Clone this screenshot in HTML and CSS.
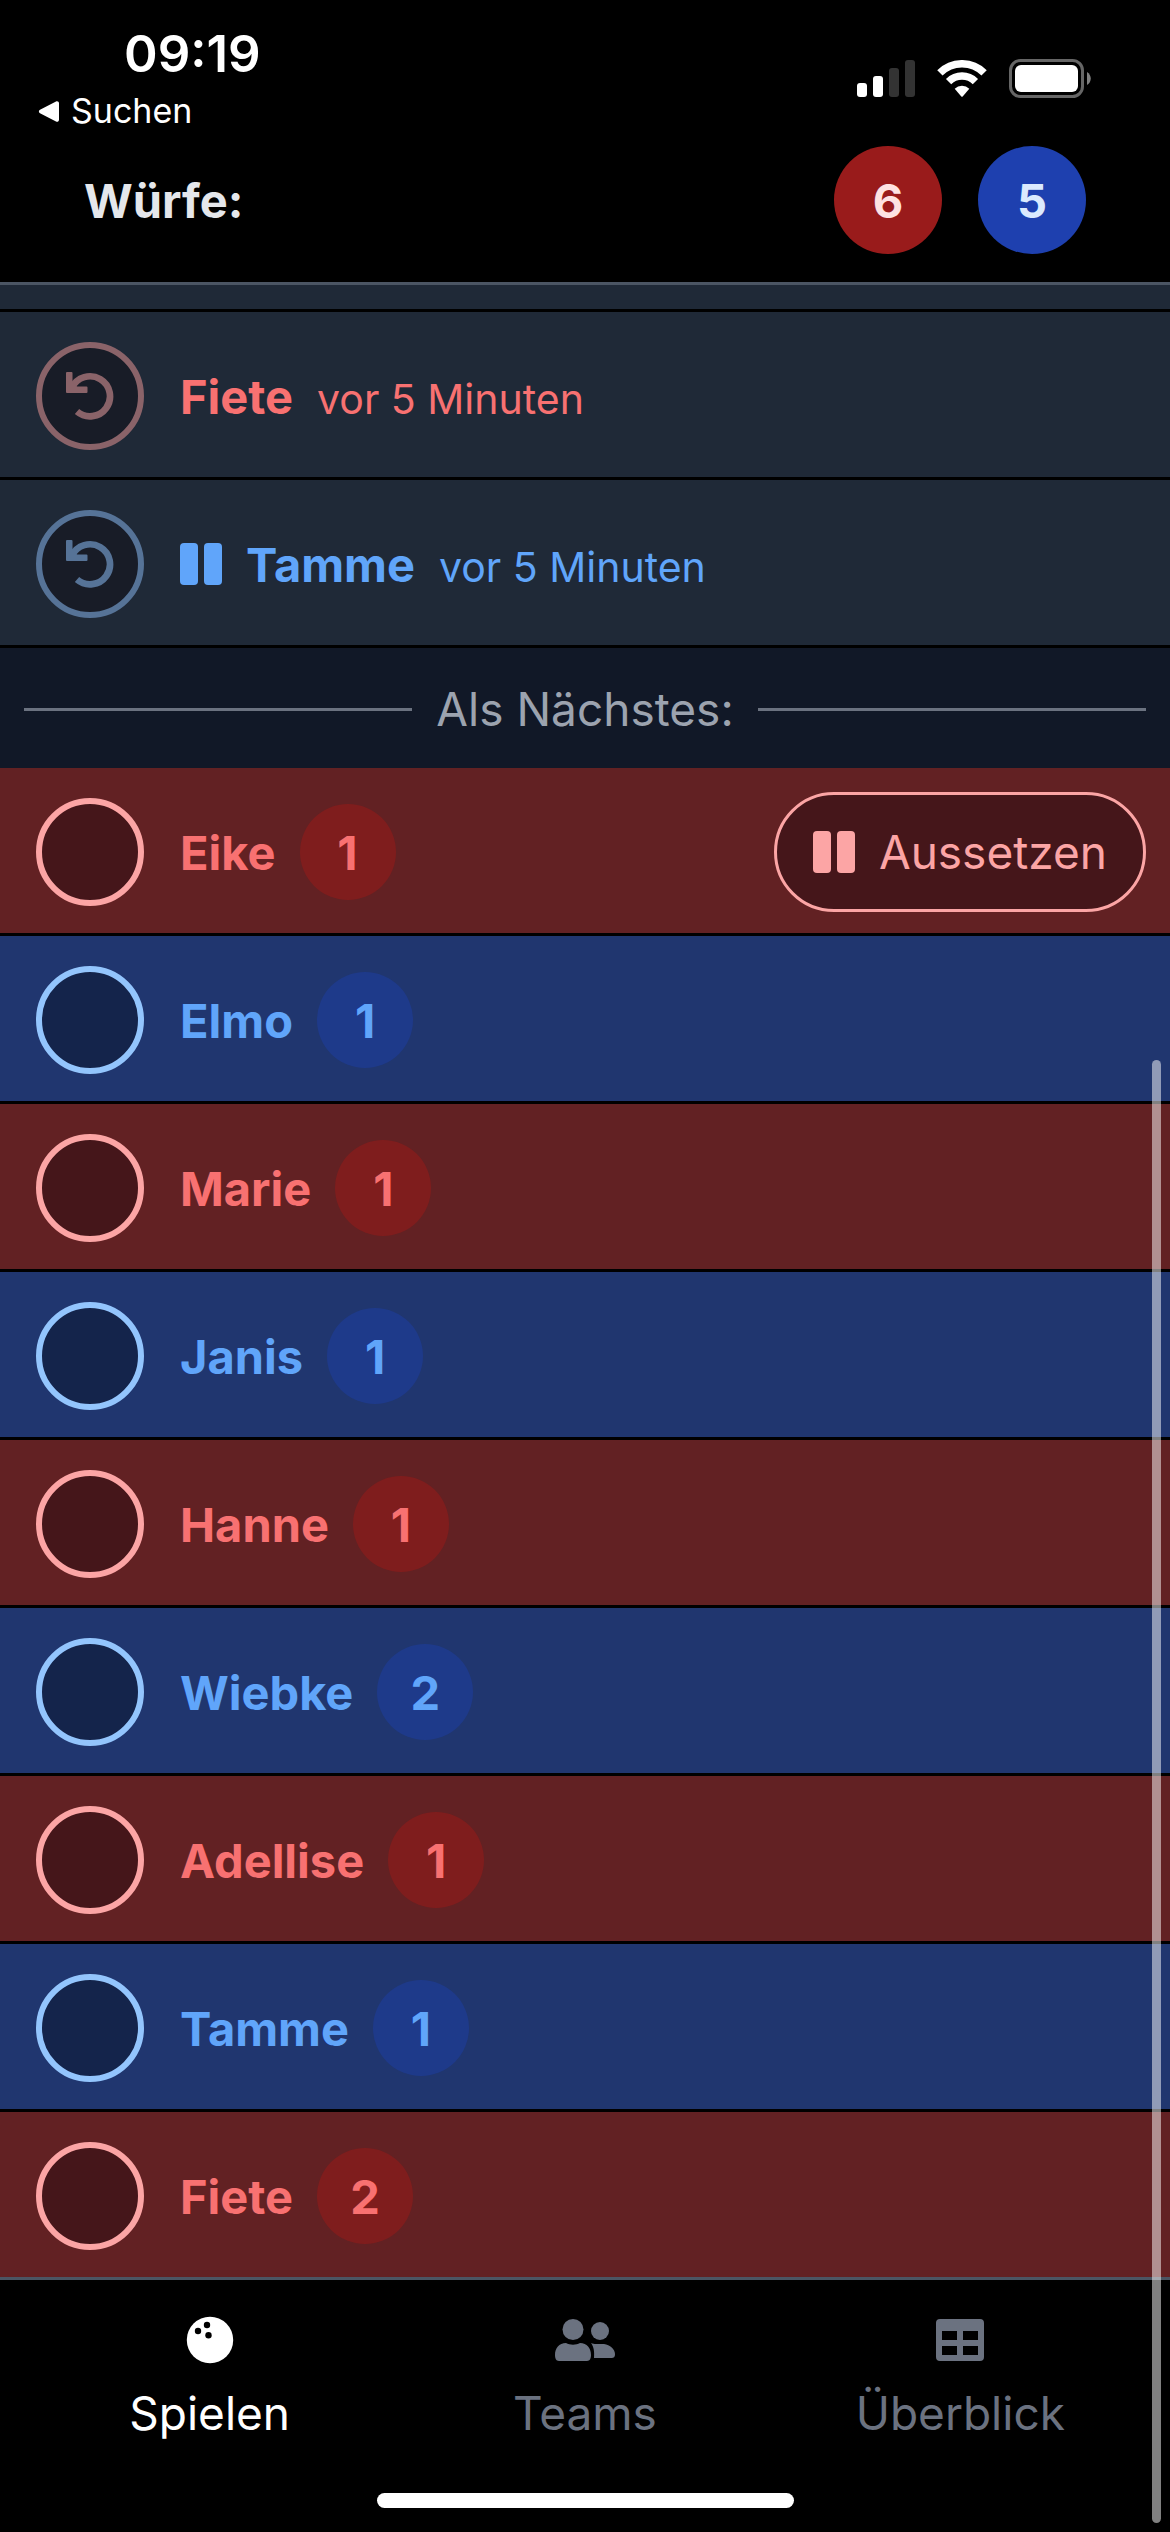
FILE: index.html
```html
<!DOCTYPE html>
<html lang="de">
<head>
<meta charset="utf-8">
<meta name="viewport" content="width=device-width">
<title>Kegeln – Spielen</title>
<link rel="stylesheet" href="styles.css">
</head>
<body>
<svg class="defs" aria-hidden="true">
  <symbol id="undo" viewBox="0 0 48 48"><path d="M6 15.600A20 20 0 1 1 11 39.500" fill="none" stroke="currentColor" stroke-width="6.700"/><path d="M1 0h4.500a1 1 0 0 1 1 1v7.500l1 3L11 14.500h9.500a1 1 0 0 1 1 1V20a1 1 0 0 1-1 1H1a1 1 0 0 1-1-1V1a1 1 0 0 1 1-1z"/></symbol>
  <symbol id="pause" viewBox="0 0 42 42"><rect width="18" height="42" rx="4"/><rect x="24" width="18" height="42" rx="4"/></symbol>
</svg>
<div class="app">
  <header class="top">
    <div class="status">
      <div class="status-left">
        <span class="clock">09:19</span>
        <a class="back" href="#suchen"><svg class="back-icon" viewBox="0 0 21 23"><path d="M18 1.500 2 9.700a2 2 0 0 0 0 3.600l16 8.200c1.500.7 3-.2 3-1.800V3.300c0-1.600-1.500-2.500-3-1.800z"/></svg>Suchen</a>
      </div>
      <div class="status-right">
        <svg class="signal" viewBox="0 0 58 37"><rect y="23" width="10" height="14" rx="3"/><rect x="16" y="16" width="10" height="21" rx="3"/><g fill="#333"><rect x="32" y="8" width="10" height="29" rx="3"/><rect x="48" width="10" height="37" rx="3"/></g></svg>
        <svg class="wifi" viewBox="0 0 50 37"><g fill="none" stroke="currentColor" stroke-width="7.500"><path d="M2.900 12.900a31.250 31.250 0 0 1 44.200 0"/><path d="M11.600 21.600a19 19 0 0 1 26.800 0"/></g><path d="M17.700 28.800a10.500 10.500 0 0 1 14.600 0L25.700 36.500a1 1 0 0 1-1.400 0z"/></svg>
        <svg class="battery" viewBox="0 0 82 39"><rect x="1.500" y="1.500" width="72" height="36" rx="10" fill="none" stroke="#666" stroke-width="3"/><rect x="6" y="6" width="63" height="27" rx="6"/><path d="M78 13c5 3 5 10 0 13z" fill="#808080"/></svg>
      </div>
    </div>
    <div class="score">
      <h1 class="score-title">Würfe:</h1>
      <span class="total red">6</span>
      <span class="total blue">5</span>
    </div>
  </header>
  <main class="list">
    <div class="row past stub"></div>
    <div class="row past red"><button class="mark" aria-label="Fiete zurücknehmen"><svg class="undo"><use href="#undo"/></svg></button><strong>Fiete</strong><time class="ago">vor 5 Minuten</time></div>
    <div class="row past blue"><button class="mark" aria-label="Tamme zurücknehmen"><svg class="undo"><use href="#undo"/></svg></button><svg class="pause"><use href="#pause"/></svg><strong>Tamme</strong><time class="ago">vor 5 Minuten</time></div>
    <h2 class="next">Als Nächstes:</h2>
    <div class="row red"><button class="mark" aria-label="Eike"></button><strong>Eike</strong><span class="count">1</span><button class="skip"><svg class="pause"><use href="#pause"/></svg>Aussetzen</button></div>
    <div class="row blue"><button class="mark" aria-label="Elmo"></button><strong>Elmo</strong><span class="count">1</span></div>
    <div class="row red"><button class="mark" aria-label="Marie"></button><strong>Marie</strong><span class="count">1</span></div>
    <div class="row blue"><button class="mark" aria-label="Janis"></button><strong>Janis</strong><span class="count">1</span></div>
    <div class="row red"><button class="mark" aria-label="Hanne"></button><strong>Hanne</strong><span class="count">1</span></div>
    <div class="row blue"><button class="mark" aria-label="Wiebke"></button><strong>Wiebke</strong><span class="count">2</span></div>
    <div class="row red"><button class="mark" aria-label="Adellise"></button><strong>Adellise</strong><span class="count">1</span></div>
    <div class="row blue"><button class="mark" aria-label="Tamme"></button><strong>Tamme</strong><span class="count">1</span></div>
    <div class="row red"><button class="mark" aria-label="Fiete"></button><strong>Fiete</strong><span class="count">2</span></div>
  </main>
  <nav class="tabs">
    <a class="tab active" href="#spielen"><svg class="tab-icon" viewBox="0 0 60 48"><circle cx="30" cy="24" r="23.200"/><g fill="#000"><circle cx="18" cy="15" r="3.200"/><circle cx="27" cy="9" r="3.200"/><circle cx="28.500" cy="19.300" r="3.200"/></g></svg>Spielen</a>
    <a class="tab" href="#teams"><svg class="tab-icon" viewBox="0 0 60 48"><circle cx="18" cy="13.500" r="10.500"/><path d="M11 27c4 2.200 10 2.200 14 0 7 0 11 5 11 12 0 3-1 6-4 6H4c-3 0-4-3-4-6 0-7 4-12 11-12z"/><circle cx="45" cy="15" r="9"/><path d="M36 27c2 .6 3 1 5 1h8c6 1 11 5 11 10 0 3-1 4-4 4H39c.5-6 0-11-3-15z"/></svg>Teams</a>
    <a class="tab" href="#ueberblick"><svg class="tab-icon" viewBox="0 0 60 48"><path fill-rule="evenodd" d="M10 3h40a4 4 0 0 1 4 4v34a4 4 0 0 1-4 4H10a4 4 0 0 1-4-4V7a4 4 0 0 1 4-4zm2 12v9h15v-9zm21 0v9h15v-9zM12 30v9h15v-9zm21 0v9h15v-9z"/></svg>Überblick</a>
  </nav>
  <div class="home"></div>
  <div class="scrollbar"></div>
</div>
</body>
</html>
```
FILE: styles.css
```css
* { box-sizing: border-box; }
body {
  margin: 0;
  background: #000;
  color: #e5e7eb;
  font-family: Inter, "Liberation Sans", sans-serif;
  font-size: 46px;
  line-height: 72px;
}
button { font: inherit; cursor: pointer; }
a { color: inherit; text-decoration: none; }
svg { display: block; flex: none; fill: currentColor; }
.defs { position: absolute; width: 0; height: 0; }
.app { position: relative; display: flex; flex-direction: column; min-height: 100vh; }

.top { border-bottom: 3px solid #4b5563; }
.status { display: flex; justify-content: space-between; height: 146px; padding: 24px 79px 0 38px; color: #fff; }
.status-left { display: flex; flex-direction: column; }
.clock { padding-left: 86px; font-size: 51px; font-weight: 600; line-height: 60px; }
.back { display: flex; align-items: center; gap: 12px; font-size: 34px; font-weight: 400; line-height: 54px; }
.back-icon { width: 21px; height: 23px; }
.status-right { display: flex; align-items: center; gap: 22px; height: 108px; }
.signal { width: 58px; height: 37px; }
.wifi { width: 50px; height: 37px; }
.battery { width: 82px; height: 39px; }

.score { display: flex; align-items: center; gap: 36px; padding: 0 84px 28px; }
.score-title { flex: 1; margin: 0; padding-top: 2px; font-size: 47px; font-weight: 700; }
.total { width: 108px; height: 108px; border-radius: 50%; font-size: 47px; font-weight: 700; line-height: 110px; text-align: center; }
.total.red { background: #991b1b; color: #fee2e2; }
.total.blue { background: #1e40af; color: #dbeafe; }

.row {
  display: flex;
  align-items: center;
  gap: 24px;
  height: 168px;
  padding: 3px 24px 0 36px;
  border-bottom: 3px solid #000;
}
.row.red { background: #622123; color: #f87171; }
.row.blue { background: #20366f; color: #60a5fa; }
.row.past { background: #1f2937; }
.row.stub { height: 27px; padding: 0; }
.row:last-child { border-color: #4b5563; }
.row strong { padding-top: 2px; font-size: 47px; font-weight: 700; }
.mark {
  display: grid;
  place-items: center;
  flex: none;
  width: 108px;
  height: 108px;
  margin-right: 12px;
  padding: 0;
  border: 6px solid;
  border-radius: 50%;
}
.red .mark, .skip { border-color: #fca5a5; background: #45161a; color: #fca5a5; }
.blue .mark { border-color: #93c5fd; background: #14244b; color: #93c5fd; }
.past .mark { background: #181c27; }
.past.red .mark { border-color: #8a6369; color: #8a6369; }
.past.blue .mark { border-color: #567397; color: #567397; }
.undo { width: 48px; height: 48px; }
.pause { width: 42px; height: 42px; }
.ago { padding-top: 6px; font-size: 41px; }
.count { width: 96px; height: 96px; border-radius: 50%; font-size: 47px; font-weight: 700; line-height: 98px; text-align: center; }
.red .count { background: #7f1d1d; }
.blue .count { background: #1e3a8a; }
.skip {
  display: flex;
  align-items: center;
  gap: 24px;
  height: 120px;
  margin-left: auto;
  padding: 0 36px;
  border: 3px solid #fca5a5;
  border-radius: 60px;
}

.next {
  display: flex;
  align-items: center;
  gap: 24px;
  height: 120px;
  margin: 0;
  padding: 2px 24px 0;
  background: #111827;
  color: #9ca3af;
  font-size: inherit;
  font-weight: 400;
}
.next::before, .next::after { content: ""; flex: 1; height: 3px; background: #6b7280; }

.tabs { display: grid; grid-template-columns: 1fr 1fr 1fr; padding: 36px 22px 0; color: #6b7280; }
.tab { display: flex; flex-direction: column; align-items: center; gap: 13px; }
.tab.active { color: #fff; }
.tab-icon { width: 60px; height: 48px; }
.home { width: 417px; height: 15px; margin: auto auto 24px; border-radius: 8px; background: #fff; }
.scrollbar { position: absolute; top: 1060px; right: 9px; bottom: 9px; width: 9px; border-radius: 5px; background: rgba(255, 255, 255, 0.5); }
```
